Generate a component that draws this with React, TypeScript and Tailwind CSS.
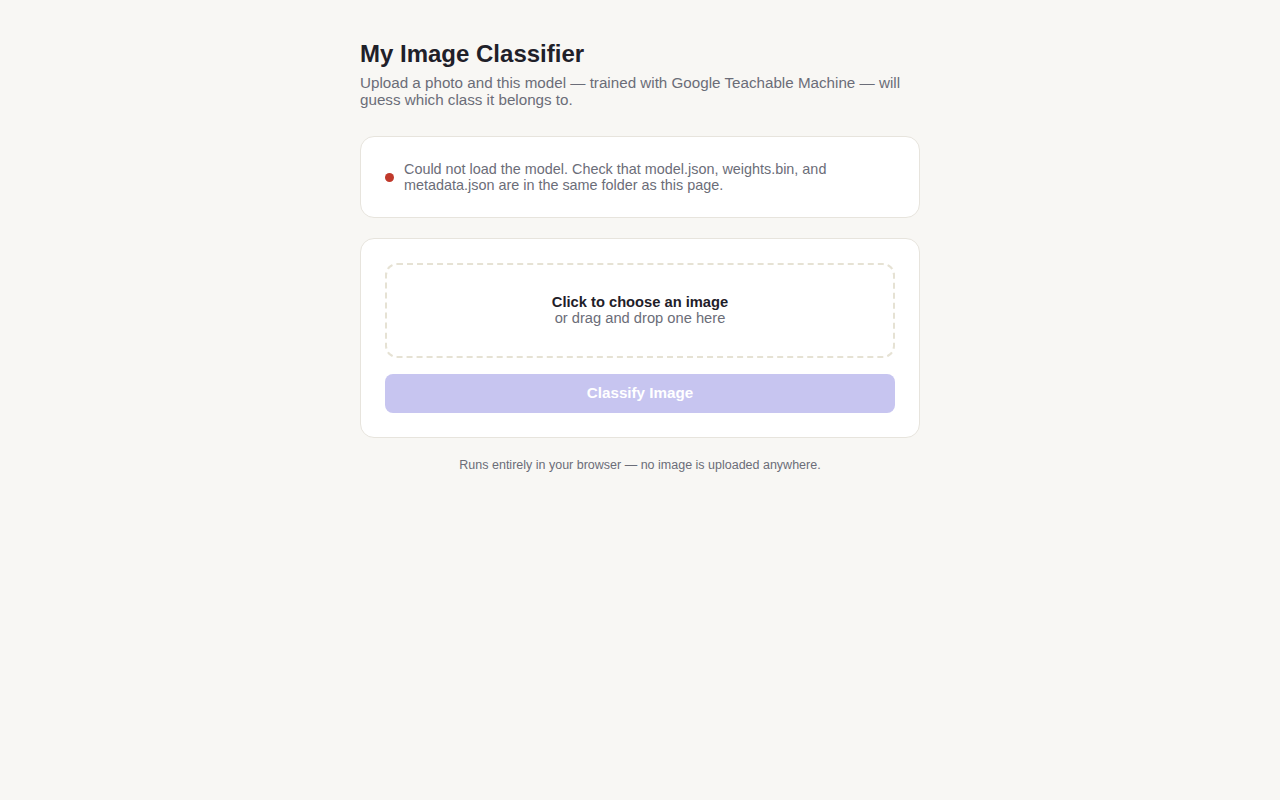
import React from 'react';

const App: React.FC = () => {
  return (
    <div className="min-h-screen w-full bg-[#f8f7f4] text-[#1f2029]" style={{ fontFamily: '"Liberation Sans", Arial, sans-serif' }}>
      <div className="mx-auto w-[560px] pt-10 pb-10">
        <h1 className="m-0 text-[24px] font-bold leading-[1.2] text-[#1f2029]">My Image Classifier</h1>
        <p className="mt-[5px] text-[15.2px] text-[#6b6d78]" style={{ lineHeight: 1.15 }}>
          Upload a photo and this model — trained with Google Teachable Machine — will guess which class it belongs to.
        </p>

        <div className="mt-[27px] rounded-[14px] border border-[#e7e4dd] bg-white px-6 pt-[24px] pb-[23px]">
          <div className="flex items-center gap-[10px]">
            <span className="h-[9px] w-[9px] shrink-0 rounded-full bg-[#c0392b]" />
            <p className="text-[14.4px] leading-[16.5px] text-[#6b6d78]">
              Could not load the model. Check that model.json, weights.bin, and metadata.json are in the same folder as this page.
            </p>
          </div>
        </div>

        <div className="mt-5 rounded-[14px] border border-[#e7e4dd] bg-white px-6 py-[24px]">
          <div className="flex h-[95px] cursor-pointer flex-col items-center justify-center rounded-[12px] border-2 border-dashed border-[#e6e2d4] text-center">
            <div className="text-[14.7px] font-bold leading-[16px] text-[#1f2029]">Click to choose an image</div>
            <div className="text-[14.7px] leading-[17px] text-[#6b6d78]">or drag and drop one here</div>
          </div>
          <button
            disabled
            className="mt-4 flex h-[39px] w-full items-center justify-center rounded-[8px] bg-[#c7c5f0] text-[15.2px] font-bold text-white"
          >
            Classify Image
          </button>
        </div>

        <p className="mt-[20px] text-center text-[12.5px] leading-[14.5px] text-[#6b6d78]">
          Runs entirely in your browser — no image is uploaded anywhere.
        </p>
      </div>
    </div>
  );
};

export default App;
